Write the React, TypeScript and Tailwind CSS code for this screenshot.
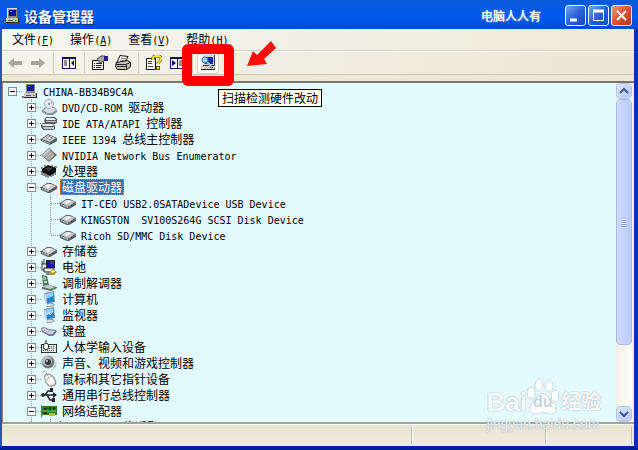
import { useState } from 'react'
import type { ReactNode } from 'react'

interface TreeNode { label: string; icon: IconName; children?: TreeNode[] }

const DISK = (
  <>
    <path d="M0 8 6 4h4l6 3v3l-7 4H7L0 11Z" fill="#5d6164" />
    <path d="M1 8 6 5h4l5 2-6 4H7Z" fill="#c9cccf" />
    <path d="m4 7 4-2 3 1-4 3Z" fill="#f6f6f6" />
    <path d="M1 9v1l6 3h1v-2Z" fill="#a0a4a7" />
    <path d="M11 11h2v-1h-2Z" fill="#3d4145" />
  </>
)

const SCREEN = (
  <>
    <path d="m3 2 10-2 1 11-8 2-2-2Z" fill="#7890a8" />
    <path d="m4 3 8-2 1 9-7 2Z" fill="#2380d8" />
    <path d="m4 3 8-2v4L5 8Z" fill="#8fd2fb" />
    <path d="m3 2 1 9 2 2-1-9Z" fill="#c8d6e2" />
    <path d="M7 12h5l2 2-4 2H5l1-2Z" fill="#9aa7b2" />
    <path d="M7 13h4l1 1-3 1H6Z" fill="#dfe5ea" />
  </>
)

const PC = (
  <>
    <path d="M3 0h10v10H3Z" fill="#8a8a86" />
    <path d="M3 0h10v1H4v9H3Z" fill="#e7e7e3" />
    <path d="M5 2h7v6H5Z" fill="#0a1590" />
    <path d="M6 3h2v1H6Z" fill="#5a70e8" />
    <path d="M2 10h12v4H2Z" fill="#c8c8c0" />
    <path d="M2 14h13v1H2ZM14 10h1v4h-1Z" fill="#222" />
    <path d="M4 12h5v1H4Z" fill="#555" />
    <path d="M0 13h2v2H0Z" fill="#777" />
    <path d="M11 12h2v1h-2Z" fill="#3c9b33" />
  </>
)

const ICONS = {
  pc: PC,
  disk: DISK,
  cdrom: (
    <>
      <path d="M1 11 4 8h9l3 3v2l-4 3H6l-5-3Z" fill="#8b9095" />
      <path d="m2 11 3-2h8l2 2-4 3H6Z" fill="#d6dadd" />
      <circle cx="8" cy="5" r="5" fill="#a6aeba" />
      <circle cx="8" cy="5" r="4" fill="#e6ebf5" />
      <path d="m8 5 3-3 1 2Z" fill="#b6a8e4" />
      <circle cx="8" cy="5" r="1" fill="#6d7688" />
    </>
  ),
  ide: (
    <>
      <path d="M5 2h9l2 2v4l-2 1H4L3 5Z" fill="#5c6063" />
      <path d="M5 3h8l2 2H5Z" fill="#eceeee" />
      <path d="M5 6h10v1H5Z" fill="#c0c4c6" />
      <path d="M2 8h9l3 3v3l-2 1H2l-2-3v-2Z" fill="#5c6063" />
      <path d="M2 9h9l2 2H2l-1-1Z" fill="#f1f2f2" />
      <path d="M2 12h11v2H3Z" fill="#c6cacc" />
    </>
  ),
  ieee: (
    <>
      <path d="m0 8 7-5 9 4v3l-7 4-9-4Z" fill="#55595c" />
      <path d="m1 8 6-4 8 3-6 4Z" fill="#cbcecf" />
      <path d="m5 7 3-2 4 2-3 2Z" fill="#84898c" />
      <path d="m6 7 2-1 2 1-1 1Z" fill="#fff" />
      <path d="m1 9 8 3v1L1 10Z" fill="#b0b3b5" />
    </>
  ),
  nvidia: (
    <>
      <path d="m8 1 8 7-8 7-8-7Z" fill="#5f5f5f" />
      <path d="m8 2 6 6-6 6-7-6Z" fill="#adadad" />
      <path d="m8 2-7 6 1 1 7-6Z" fill="#dedede" />
    </>
  ),
  cpu: (
    <>
      <path d="m1 6 6-4 8 3v4l-6 4-8-4Z" fill="#0d0d0d" />
      <path d="m4 6 3-2 5 1-4 3Z" fill="#3a3a3a" />
      <path d="M1 8v4M3 9v4M5 10v4M7 11v4M10 11v3M12 10v3M14 8v4" stroke="#222" />
      <path d="M0 5h2M3 3h2M10 3h2M13 4h3" stroke="#222" />
    </>
  ),
  battery: (
    <>
      <path d="M5 1h9v8H5Z" fill="#222" />
      <path d="M6 2h7v6H6Z" fill="#1713a5" />
      <path d="M9 2h4v3H9Z" fill="#5b2bb5" />
      <path d="M1 2v9h3M1 5h4M3 0v5" stroke="#333" fill="none" />
      <path d="M3 9h10v4H3Z" fill="#e5e5e5" stroke="#222" />
      <path d="M5 15h7" stroke="#111" />
      <path d="m8 13 4-3 4 3-3 3h-3Z" fill="#b29a25" />
      <path d="m10 13 2-2 2 1-2 2Z" fill="#fff199" />
    </>
  ),
  modem: (
    <>
      <path d="m1 0 5 1 2 9-6 1Z" fill="#4d765c" />
      <path d="m2 1 3 1v3H2Z" fill="#8fc49c" />
      <path d="m1 12 8-2 7 2v1l-6 3-9-2Z" fill="#676b70" />
      <path d="m2 12 7-2 5 2-5 2Z" fill="#c5cbd0" />
      <path d="M3 6h3v2H3Z" fill="#bfd9c5" />
      <path d="M10 13h3v1h-3Z" fill="#4ab63a" />
    </>
  ),
  computer: SCREEN,
  monitor: (
    <>
      {SCREEN}
      <path d="m6 8 2-3 1 3 3-4" stroke="#d8efff" fill="none" />
    </>
  ),
  keyboard: (
    <>
      <path d="m0 5 3-1 5 2 7 1 1 2-4 4H8L1 9Z" fill="#77799a" />
      <path d="m1 6 2-1 5 2 6 1-3 3H8L2 8Z" fill="#dcdceb" />
      <path d="m3 7 7 3M5 6l7 3" stroke="#9698b8" strokeDasharray="1 1" />
    </>
  ),
  hid: (
    <>
      <path d="M0 5h16v9H0Z" fill="#333" />
      <path d="M1 6h14v7H1Z" fill="#e8e8e2" />
      <path d="M8 7.500h6M8 9.500h6M2 11.500h12" stroke="#555" strokeDasharray="1 1" />
      <path d="M5 1v4" stroke="#222" />
      <rect x="2.500" y="4.500" width="5" height="6" rx="2" fill="#fff" stroke="#222" />
    </>
  ),
  sound: (
    <>
      <circle cx="7" cy="7" r="6.500" fill="#73777a" />
      <circle cx="6" cy="6" r="5" fill="#b9bdbf" />
      <circle cx="7" cy="7" r="3" fill="#303437" />
      <circle cx="6" cy="6" r="1" fill="#e2e2e2" />
      <path d="M12 13c2-1 3-3 3-6M10 15c2 0 4-2 5-4" stroke="#a9b9d6" fill="none" />
    </>
  ),
  mouse: (
    <>
      <path d="M2 0c2 1 3 1 4 3" stroke="#999" fill="none" />
      <path d="M3 5c2-4 7-3 10 1 3 4 3 8 0 9-4 2-8-1-9-5Z" fill="#96938e" />
      <path d="M4 6c2-4 6-2 8 1 3 4 2 6 0 7-3 1-6-1-7-4Z" fill="#fbf9f5" />
      <path d="m5 9 6-4M6 4l2 3" stroke="#bab7b0" />
    </>
  ),
  usb: (
    <>
      <path d="M1 8h12M4 8l3-4h3M6 8l3 5h3" stroke="#222" strokeWidth="1.500" fill="none" />
      <circle cx="2" cy="8" r="2" fill="#333" />
      <path d="m12 5 4 3-4 3ZM9 1h3v4H9ZM11 11h3v4h-3Z" fill="#222" />
    </>
  ),
  network: (
    <>
      <path d="M1 3h15v9H1Z" fill="#2b7b29" />
      <path d="M0 2h1v12H0Z" fill="#777" />
      <path d="M3 5h3v2H3ZM8 4h2v4H8ZM12 4h2v3h-2ZM3 9h3v2H3Z" fill="#113f14" />
      <path d="M2 8h13" stroke="#7bc562" />
      <path d="M8 10h6v3H8Z" fill="#c4b64b" />
    </>
  ),
}

type IconName = keyof typeof ICONS

const TREE: TreeNode[] = [
  { label: 'DVD/CD-ROM 驱动器', icon: 'cdrom', children: [] },
  { label: 'IDE ATA/ATAPI 控制器', icon: 'ide', children: [] },
  { label: 'IEEE 1394 总线主控制器', icon: 'ieee', children: [] },
  { label: 'NVIDIA Network Bus Enumerator', icon: 'nvidia', children: [] },
  { label: '处理器', icon: 'cpu', children: [] },
  {
    label: '磁盘驱动器', icon: 'disk', children: [
      { label: 'IT-CEO USB2.0SATADevice USB Device', icon: 'disk' },
      { label: 'KINGSTON  SV100S264G SCSI Disk Device', icon: 'disk' },
      { label: 'Ricoh SD/MMC Disk Device', icon: 'disk' },
    ],
  },
  { label: '存储卷', icon: 'disk', children: [] },
  { label: '电池', icon: 'battery', children: [] },
  { label: '调制解调器', icon: 'modem', children: [] },
  { label: '计算机', icon: 'computer', children: [] },
  { label: '监视器', icon: 'monitor', children: [] },
  { label: '键盘', icon: 'keyboard', children: [] },
  { label: '人体学输入设备', icon: 'hid', children: [] },
  { label: '声音、视频和游戏控制器', icon: 'sound', children: [] },
  { label: '鼠标和其它指针设备', icon: 'mouse', children: [] },
  { label: '通用串行总线控制器', icon: 'usb', children: [] },
  {
    label: '网络适配器', icon: 'network', children: [
      { label: '1394 网络适配器', icon: 'network' },
    ],
  },
]

const MENUS = [
  { label: '文件', hotkey: 'F' },
  { label: '操作', hotkey: 'A' },
  { label: '查看', hotkey: 'V' },
  { label: '帮助', hotkey: 'H' },
]

function Icon({ name }: { name: IconName }) {
  return <svg className="size-4 shrink-0" viewBox="0 0 16 16" aria-hidden="true">{ICONS[name]}</svg>
}

// Latin runs are half the width of a Chinese character, as in SimSun
function Mixed({ text }: { text: string }) {
  return (
    <>
      {text.split(/([\x20-\x7e]+)/).filter(Boolean).map((part, i) => (
        /^[\x20-\x7e]/.test(part)
          ? <span key={i} className="font-['DejaVu_Sans_Mono','Liberation_Mono',monospace] text-[10px]">{part}</span>
          : <span key={i}>{part}</span>
      ))}
    </>
  )
}

// Dotted connector lines of the tree, one 19px cell per level
function Guide({ kind }: { kind: 'blank' | 'line' | 'tee' | 'end' }) {
  return (
    <svg className="h-4 w-[19px] shrink-0" viewBox="0 0 19 16" stroke="#8f9a9c" strokeDasharray="1 1" aria-hidden="true">
      {(kind === 'line' || kind === 'tee') && <path d="M9.500 0v16" />}
      {kind === 'end' && <path d="M9.500 0v8" />}
      {(kind === 'tee' || kind === 'end') && <path d="M10 8.500h9" />}
    </svg>
  )
}

function Toggle({ open, root, label, onClick }: { open: boolean; root?: boolean; label: string; onClick: () => void }) {
  return (
    <button onClick={onClick} aria-label={label} aria-expanded={open} className="h-4 w-[19px] shrink-0">
      <svg className="h-4 w-[19px]" viewBox="0 0 19 16" aria-hidden="true">
        {!root && <path d="M9.500 0v16" stroke="#8f9a9c" strokeDasharray="1 1" />}
        <path d="M14 8.500h5" stroke="#8f9a9c" strokeDasharray="1 1" />
        <rect x="5.500" y="4.500" width="8" height="8" fill="#fff" stroke="#848e90" />
        <path d={open ? 'M7 8.500h5' : 'M7 8.500h5M9.500 6v5'} stroke="#000" />
      </svg>
    </button>
  )
}

function Row({ node, selected, onSelect, children }: { node: TreeNode; selected: boolean; onSelect: () => void; children: ReactNode }) {
  return (
    <div className="flex h-4 items-center">
      {children}
      <span className="mr-[3px]"><Icon name={node.icon} /></span>
      <button
        onClick={onSelect}
        className={`h-4 whitespace-pre px-0.5 text-xs leading-4 ${selected ? 'bg-[#3b70ae] text-white outline-1 -outline-offset-1 outline-dotted outline-[#c98f51]' : 'text-black'}`}
      >
        <Mixed text={node.label} />
      </button>
    </div>
  )
}

function ToolButton({ label, active, disabled, children }: { label: string; active?: boolean; disabled?: boolean; children: ReactNode }) {
  return (
    <button
      aria-label={label}
      disabled={disabled}
      className={`flex h-[22px] w-[22px] shrink-0 items-center justify-center rounded-sm ${active ? 'border border-[#d5d2c7] bg-[#faf9f5]' : ''}`}
    >
      <svg className="size-4" viewBox="0 0 16 16" aria-hidden="true">{children}</svg>
    </button>
  )
}

function Divider() {
  return <div className="flex h-5 w-[7px] shrink-0 justify-center"><div className="w-px bg-[#cac7b5]" /></div>
}

function Toolbar() {
  return (
    <div className="flex h-6 shrink-0 items-center gap-px border-b border-[#c9c5b3] border-t border-t-white bg-linear-to-r from-[#f5f4ec] to-[#ebe7d6] pl-0.5">
      <ToolButton label="后退" disabled>
        <path d="M1 8 7 3v3h8v4H7v3Z" fill="#a8a699" />
      </ToolButton>
      <ToolButton label="前进" disabled>
        <path d="M15 8 9 3v3H1v4h8v3Z" fill="#a8a699" />
      </ToolButton>
      <Divider />
      <ToolButton label="显示/隐藏控制台树">
        <path d="M1 2h14v12H1Z" fill="#10105c" />
        <path d="M2 4h6v9H2ZM9 4h5v9H9Z" fill="#fff" />
        <path d="M3 6h3M3 8h3M3 10h3" stroke="#222" />
        <path d="m13 5-3 3 3 3Z" fill="#10105c" />
      </ToolButton>
      <Divider />
      <ToolButton label="属性">
        <path d="M.5 5.500h11v9H.5Z" fill="#fff" stroke="#111" />
        <path d="M2 8.500h1M4 8.500h6M2 10.500h1M4 10.500h6M2 12.500h1M4 12.500h5" stroke="#222" />
        <path d="m5 4 4-3h4v4l-4 3-2-1Z" fill="#a9a9a2" stroke="#444" />
        <path d="M12 1h4v5h-4Z" fill="#26267e" />
      </ToolButton>
      <ToolButton label="打印">
        <path d="m5 .5 8 1-3 6H2Z" fill="#fff" stroke="#111" />
        <path d="m6 3 5 1M5 5l5 1" stroke="#777" />
        <path d="m1.500 7.500 11-2 3 2v4l-4 3h-9l-2-3Z" fill="#c8c5ae" stroke="#111" />
        <path d="M1 9.500h10l4-2M2 11.500h9" stroke="#222" fill="none" />
        <path d="M11.500 10v4" stroke="#222" />
      </ToolButton>
      <Divider />
      <ToolButton label="帮助">
        <path d="M.5 3.500h9v11h-9Z" fill="#fff" stroke="#111" />
        <path d="M2 6.500h4M2 8.500h4M2 11.500h5" stroke="#444" />
        <path d="M7 5V3c0-1 1-2 3-2h2c2 0 3 1 3 3s-3 3-3 5" stroke="#594d00" strokeWidth="3" fill="none" />
        <path d="M7 5V3c0-1 1-2 3-2h2c2 0 3 1 3 3s-3 3-3 5" stroke="#f4df36" strokeWidth="2" fill="none" />
        <path d="M10 11h4v4h-4Z" fill="#594d00" />
        <path d="M11 12h2v2h-2Z" fill="#ffe936" />
      </ToolButton>
      <ToolButton label="显示/隐藏操作窗格">
        <path d="M1 2h15v12H1Z" fill="#10105c" />
        <path d="M2 4h6v9H2ZM9 4h6v9H9Z" fill="#fff" />
        <path d="m3 5 4 3-4 3Z" fill="#10105c" />
        <path d="M10 6h4M10 8h4M10 10h4" stroke="#222" />
      </ToolButton>
      <Divider />
      <div className="relative">
        <ToolButton label="扫描检测硬件改动" active>
          <path d="M3 0h12v11H3Z" fill="#333" />
          <path d="M3 0h11v10H3Z" fill="#d6d3c8" />
          <path d="M5 2h8v7H5Z" fill="#082e9b" />
          <path d="M1 11h13l1 4H1Z" fill="#222" />
          <path d="M1 11h13v3H1Z" fill="#d5d2c6" />
          <path d="m6 6 5 5" stroke="#9bcef0" strokeWidth="2" />
          <circle cx="5" cy="5" r="3" fill="#9bcef0" stroke="#3b7099" />
          <path d="M10 12h3v1h-3Z" fill="#3d3d3d" />
        </ToolButton>
        {/* highlight frame and arrow around the scan button */}
        <div className="pointer-events-none absolute -left-[15px] -top-2 z-10 h-[42px] w-[52px] rounded-md border-10 border-[#fa0000]" />
        <svg className="pointer-events-none absolute -top-3 left-[50px] z-10 h-[27px] w-[29px]" viewBox="0 0 29 27" aria-hidden="true">
          <path d="m0 26 6-15 4 4L24 1l5 7-12 11 3 5Z" fill="#fa0f0a" />
        </svg>
        <div role="tooltip" className="absolute left-[21px] top-[37px] z-10 h-[18px] whitespace-nowrap border border-black bg-[#fffff0] px-[3px] text-xs leading-4 text-black">
          扫描检测硬件改动
        </div>
      </div>
    </div>
  )
}

function CaptionButton({ label, close, children }: { label: string; close?: boolean; children: ReactNode }) {
  return (
    <button
      aria-label={label}
      className={`flex size-[21px] items-center justify-center rounded-[3px] border border-[#e8effc] bg-linear-to-br ${close ? 'from-[#e8997f] via-[#d45334] to-[#b73416]' : 'from-[#7ba3f0] via-[#2c61d8] to-[#1746bb]'}`}
    >
      <svg className="size-[19px]" viewBox="0 0 19 19" fill="none" stroke="#fff" aria-hidden="true">{children}</svg>
    </button>
  )
}

function ScrollButton({ label, d }: { label: string; d: string }) {
  return (
    <button aria-label={label} className="flex h-4 w-full shrink-0 items-center justify-center rounded-sm border border-white bg-linear-to-br from-[#dbe5ff] to-[#b5c8f5] outline-1 -outline-offset-1 outline-[#b4c4e4]">
      <svg className="size-3" viewBox="0 0 12 12" fill="none" stroke="#43588b" strokeWidth="2" aria-hidden="true"><path d={d} /></svg>
    </button>
  )
}

function ScrollBar() {
  return (
    <div className="flex w-4 shrink-0 flex-col bg-linear-to-r from-[#f0efe7] to-[#fefefb]">
      <ScrollButton label="向上滚动" d="m2 8 4-4 4 4" />
      <div className="flex min-h-0 grow-4 basis-0 flex-col items-center justify-center gap-px rounded-sm border border-white bg-linear-to-r from-[#cbd9ff] to-[#b9cbf9] outline-1 -outline-offset-1 outline-[#aabbdd]">
        {[0, 1, 2, 3].map(i => <div key={i} className="h-px w-1.5 bg-[#eef3ff] shadow-[0_1px_0_#8fa9dd]" />)}
      </div>
      <div className="min-h-0 grow basis-0" />
      <ScrollButton label="向下滚动" d="m2 4 4 4 4-4" />
    </div>
  )
}

function Watermark() {
  return (
    <div className="pointer-events-none absolute bottom-3.5 right-[37px] z-10 font-['Liberation_Sans','Noto_Sans_CJK_SC',sans-serif] text-white/90 [text-shadow:0_0_1px_#a9b6b9,0_0_2px_#b9c4c6]">
      <div className="flex h-[38px] items-end">
        <span className="text-[26px] font-bold leading-7">Bai</span>
        <span className="relative h-[38px] w-[34px]">
          <svg className="size-full" viewBox="0 0 34 38" fill="#fafeff" stroke="#cbd5d7" aria-hidden="true">
            <ellipse cx="4" cy="15" rx="4" ry="6" />
            <ellipse cx="12" cy="7" rx="4" ry="6" />
            <ellipse cx="22" cy="8" rx="4" ry="6" />
            <ellipse cx="28" cy="18" rx="4" ry="6" />
            <path d="M10 19c3-5 9-5 12 1 2 4 7 6 7 11 0 4-3 6-7 5-4-2-8-2-12 0-4 1-8-2-7-6 0-5 5-7 7-11Z" />
          </svg>
          <span className="absolute bottom-1 left-1.5 text-base font-bold leading-5 text-[#cbd5d7] [text-shadow:none]">du</span>
        </span>
        <span className="text-xl font-bold leading-7">经验</span>
      </div>
      <div className="text-sm leading-4 text-white/70">jingyan.baidu.com</div>
    </div>
  )
}

export default function App() {
  const [rootOpen, setRootOpen] = useState(true)
  const [open, setOpen] = useState<string[]>(['磁盘驱动器', '网络适配器'])
  const [selected, setSelected] = useState('磁盘驱动器')

  function toggle(label: string) {
    setOpen(o => (o.includes(label) ? o.filter(l => l !== label) : [...o, label]))
  }

  const root: TreeNode = { label: 'CHINA-BB34B9C4A', icon: 'pc' }

  return (
    <div className="relative flex h-screen flex-col overflow-hidden border-b-4 border-b-[#03209c] bg-[#0831b0] font-['Noto_Sans_CJK_SC',sans-serif]">

      {/* Title bar */}
      <header className="flex h-[29px] shrink-0 items-center bg-linear-to-b from-[#0b5ad8] via-[#0058ee] via-60% to-[#0148d8] pl-1 pr-1.5 pt-0.5">
        <Icon name="pc" />
        <h1 className="ml-1 text-sm font-bold leading-5 text-white [text-shadow:1px_1px_0_#0b2a79]">设备管理器</h1>
        <span className="ml-auto mr-6 text-xs font-medium text-white [text-shadow:0_0_2px_#bcd4ff]">电脑人人有</span>
        <div className="flex gap-0.5">
          <CaptionButton label="最小化"><path d="M4 14h7" strokeWidth="3" /></CaptionButton>
          <CaptionButton label="最大化"><path d="M4.500 5v9.500h10V5" /><path d="M4 5h11" strokeWidth="3" /></CaptionButton>
          <CaptionButton label="关闭" close><path d="m5 5 9 9M14 5l-9 9" strokeWidth="2" /></CaptionButton>
        </div>
      </header>

      <div className="flex min-h-0 flex-1 border-l-2 border-l-[#1f58c4] pr-1">
        <div className="flex min-w-0 flex-1 flex-col bg-[#ece9d8]">

          <nav className="flex h-[22px] shrink-0 items-center border-b border-[#d3cfbf] bg-linear-to-r from-[#f7f6f0] to-[#edead9] pl-0.5">
            {MENUS.map(m => (
              <button key={m.label} className="whitespace-nowrap px-2 text-xs leading-5 text-black">
                {m.label}
                <span className="font-['DejaVu_Sans_Mono','Liberation_Mono',monospace] text-[10px]">(<u>{m.hotkey}</u>)</span>
              </button>
            ))}
          </nav>

          <Toolbar />

          {/* Device tree */}
          <main className="mt-1.5 flex min-h-0 flex-1 border-b-2 border-l border-t-2 border-b-[#a5a293] border-l-[#8c8e83] border-t-[#77776d] bg-[#e3fbff]">
            <div className="min-w-0 flex-1 overflow-hidden">
              <Row node={root} selected={selected === root.label} onSelect={() => setSelected(root.label)}>
                <Toggle root open={rootOpen} label={root.label} onClick={() => setRootOpen(!rootOpen)} />
              </Row>
              {rootOpen && TREE.map(node => (
                <div key={node.label}>
                  <Row node={node} selected={selected === node.label} onSelect={() => setSelected(node.label)}>
                    <Guide kind="blank" />
                    <Toggle open={open.includes(node.label)} label={node.label} onClick={() => toggle(node.label)} />
                  </Row>
                  {open.includes(node.label) && node.children?.map((child, i, all) => (
                    <Row key={child.label} node={child} selected={selected === child.label} onSelect={() => setSelected(child.label)}>
                      <Guide kind="blank" />
                      <Guide kind="line" />
                      <Guide kind={i === all.length - 1 ? 'end' : 'tee'} />
                    </Row>
                  ))}
                </div>
              ))}
            </div>
            <ScrollBar />
            <div className="w-0.5 bg-[#f1efe4]" />
          </main>

          {/* Status bar */}
          <footer className="flex h-[22px] shrink-0 border-t border-white bg-linear-to-b from-[#e9e5d5] to-[#efecdf] py-0.5 pr-0.5">
            <div className="flex-1 border-r border-[#bdb9a7]" />
            <div className="w-[134px] border-l border-r border-l-white border-r-[#bdb9a7]" />
            <div className="w-[86px] border-l border-r border-l-white border-r-[#bdb9a7]" />
          </footer>
        </div>
      </div>

      <Watermark />
    </div>
  )
}
